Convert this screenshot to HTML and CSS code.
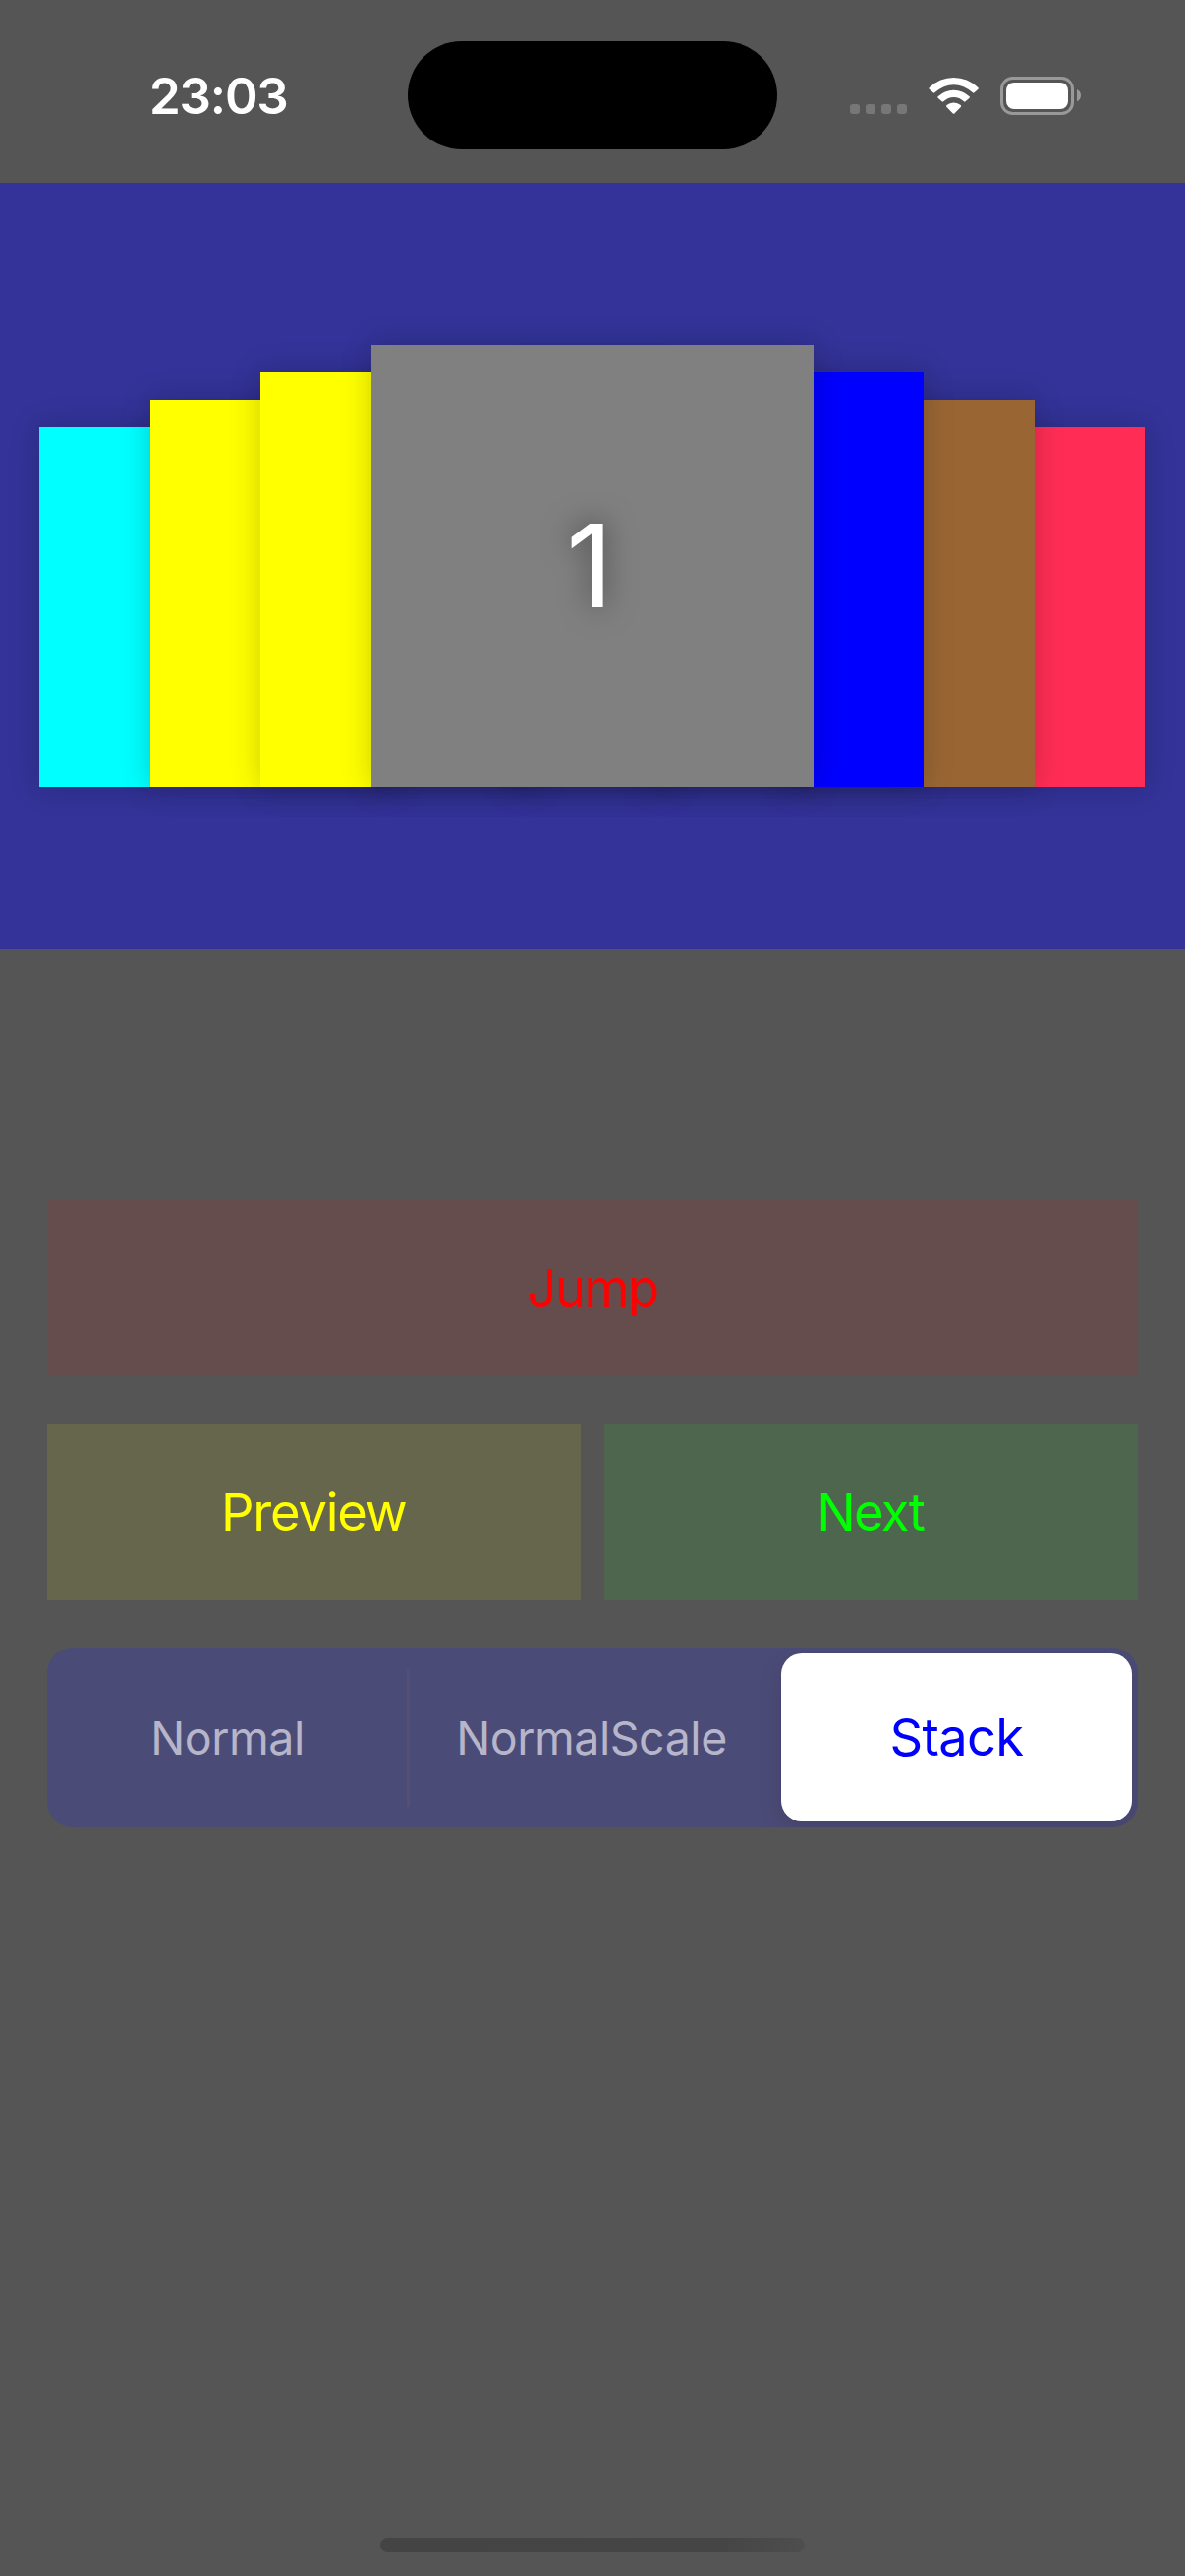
FILE: index.html
```html
<!DOCTYPE html>
<html lang="en">
<head>
<meta charset="utf-8">
<title>Card Stack</title>
<link rel="stylesheet" href="styles.css">
</head>
<body>
<div class="screen">
  <header class="status">
    <div class="time">23:03</div>
    <div class="island"></div>
    <svg class="indicators" width="236" height="40" viewBox="0 0 236 40">
      <g fill="#777">
        <rect x="0" y="28" width="10" height="10" rx="3"/>
        <rect x="16" y="28" width="10" height="10" rx="3"/>
        <rect x="32" y="28" width="10" height="10" rx="3"/>
        <rect x="48" y="28" width="10" height="10" rx="3"/>
      </g>
      <g fill="#fff">
        <path d="M80.7 11.2 Q79.900 12 80.700 12.800 L84.700 16.300 Q85.500 17 86.300 16.300 Q95.500 8.200 105.600 8.200 Q115.700 8.200 124.900 16.300 Q125.700 17 126.500 16.300 L130.500 12.800 Q131.300 12 130.500 11.200 Q119.800 1 105.600 1 Q91.400 1 80.700 11.200Z"/>
        <path d="M89.600 20.300 Q88.900 21 89.600 21.700 L93.700 25.300 Q94.400 26 95.200 25.300 Q99.800 21 105.600 21 Q111.400 21 116 25.300 Q116.800 26 117.500 25.300 L121.600 21.700 Q122.300 21 121.600 20.300 Q114.700 13.700 105.600 13.700 Q96.500 13.700 89.600 20.300Z"/>
        <path d="M98.500 29 Q97.500 30 98.500 31 L104.600 37.300 Q105.600 38.300 106.600 37.300 L112.700 31 Q113.700 30 112.700 29 Q109.800 26.500 105.600 26.500 Q101.400 26.500 98.500 29Z"/>
      </g>
      <rect x="154.500" y="1.500" width="72" height="36" rx="11" fill="none" stroke="#999" stroke-width="3"/>
      <rect x="159" y="6" width="63" height="27" rx="8" fill="#fff"/>
      <path d="M231 13 Q235 15 235 19 Q235 23.500 231 25.300Z" fill="#999"/>
    </svg>
  </header>

  <section class="stage">
    <div class="deck">
      <div class="card left far cyan"></div>
      <div class="card left mid yellow"></div>
      <div class="card left near yellow"></div>
      <div class="card front gray">1</div>
      <div class="card right near blue"></div>
      <div class="card right mid brown"></div>
      <div class="card right far pink"></div>
    </div>
  </section>

  <main class="controls">
    <div class="button jump"><span>Jump</span></div>
    <div class="pair">
      <div class="button preview"><span>Preview</span></div>
      <div class="button next"><span>Next</span></div>
    </div>
    <div class="segments">
      <div class="segment normal"><span>Normal</span></div>
      <div class="divider"></div>
      <div class="segment scale"><span>NormalScale</span></div>
      <div class="segment selected"><span>Stack</span></div>
    </div>
  </main>

  <div class="home"></div>
</div>
</body>
</html>
```

FILE: styles.css
```css
* { box-sizing: border-box; }

body {
  margin: 0;
  background: #555;
  font-family: Inter, "Liberation Sans", sans-serif;
  color: #fff;
}

.screen {
  width: 1206px;
  height: 2622px;
  display: flex;
  flex-direction: column;
  overflow: hidden;
}

/* Status bar */
.status {
  height: 186px;
  display: grid;
  grid-template-columns: 415px 376px 415px;
  align-items: start;
}
.time {
  padding: 67px 0 0 152px;
  font-size: 51px;
  line-height: 62px;
  font-weight: 600;
  letter-spacing: -1.200px;
}
.island {
  height: 110px;
  margin-top: 42px;
  border-radius: 55px;
  background: #000;
}
.indicators { margin: 78px 0 0 74px; }

/* Card stack */
.stage {
  height: 780px;
  padding: 165px 41px 0 40px;
  background: #339;
}
.deck {
  height: 450px;
  display: grid;
  grid-template-columns: 113px 112px 113px 450px 112px 113px 112px;
  grid-template-rows: 450px;
  align-items: end;
}
.card { box-shadow: 0 0 30px rgba(0, 0, 0, 0.2); }
.left { justify-self: start; }
.right { justify-self: end; }
.far { width: 366px; height: 366px; z-index: 1; }
.mid { width: 394px; height: 394px; z-index: 2; }
.near { width: 422px; height: 422px; z-index: 3; }
.front {
  width: 450px;
  height: 450px;
  padding-right: 6px;
  z-index: 4;
  display: flex;
  align-items: center;
  justify-content: center;
  font-size: 117px;
  line-height: 140px;
  font-weight: 400;
  text-shadow: 0 0 30px rgba(0, 0, 0, 0.5);
}
.cyan { background: #0ff; }
.yellow { background: #ff0; }
.gray { background: #808080; }
.blue { background: #00f; }
.brown { background: #963; }
.pink { background: #ff2d55; }

/* Controls */
.controls {
  padding: 255px 48px 0;
  display: flex;
  flex-direction: column;
  gap: 48px;
}
.button {
  flex: 1 0 0;
  display: flex;
  align-items: center;
  justify-content: center;
  font-size: 52.500px;
  line-height: 64px;
  letter-spacing: -1.200px;
}
.jump { flex: 0 0 180px; background: #664d4d; color: #f00; letter-spacing: -1.500px; }
.pair { height: 180px; display: flex; gap: 24px; }
.preview { background: #66664c; color: #ff0; }
.next { background: #4d664d; color: #0f0; letter-spacing: -1.700px; padding-right: 1px; }

.segments {
  height: 183px;
  padding: 6px;
  display: flex;
  align-items: center;
  border-radius: 26px;
  background: #4b4b77;
}
.segment {
  height: 171px;
  display: flex;
  align-items: center;
  justify-content: center;
  font-size: 46.500px;
  line-height: 56px;
  letter-spacing: -0.450px;
  color: #b6b5ca;
}
.normal { width: 360px; padding-right: 5px; }
.scale { width: 378px; padding-right: 8px; }
.selected {
  width: 357px;
  padding-bottom: 2px;
  border-radius: 21px;
  background: #fff;
  color: #00f;
  font-size: 52.500px;
  letter-spacing: -0.700px;
  box-shadow: 0 9px 24px rgba(0, 0, 0, 0.12);
  clip-path: inset(-6px -6px -6px -40px round 0 26px 26px 0);
}
.divider { width: 3px; height: 141px; border-radius: 2px; background: #534f77; }

.home {
  width: 432px;
  height: 15px;
  margin: auto auto 24px 387px;
  border-radius: 8px;
  background: linear-gradient(100deg, #444 0%, #454545 80%, #4e4e4e 100%);
}
```
